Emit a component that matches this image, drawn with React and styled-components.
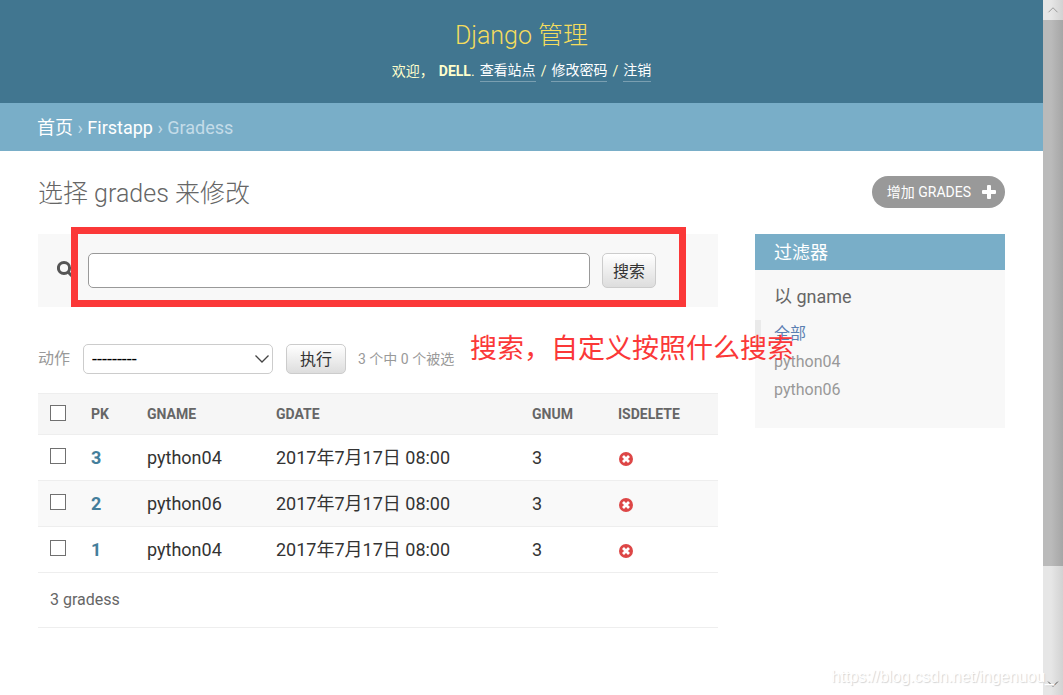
// App.jsx

import React, { useState } from 'react';
import styled, { createGlobalStyle } from 'styled-components';

const GlobalStyle = createGlobalStyle`
  * {
    box-sizing: border-box;
  }
  body {
    margin: 0;
    background: #fff;
    color: #333;
    font-family: Roboto, "Noto Sans CJK SC", sans-serif;
    font-size: 18px;
    line-height: 22px;
  }
  input, select, button {
    font-family: inherit;
    margin: 0;
  }
  a {
    color: inherit;
    text-decoration: none;
  }
`;

const Screen = styled.div`
  position: relative;
  display: flex;
  min-height: 100vh;
  overflow: hidden;
`;

const Page = styled.div`
  flex: 1;
  min-width: 0;
`;

const Header = styled.header`
  display: flex;
  flex-direction: column;
  align-items: center;
  gap: 8px;
  height: 103px;
  padding-top: 20px;
  background: #417690;
  color: #ffc;
`;

const SiteName = styled.h1`
  margin: 0;
  color: #f5dd5d;
  font-size: 25px;
  font-weight: 300;
  line-height: 32px;
`;

const UserTools = styled.div`
  display: flex;
  gap: 5px;
  font-size: 14px;
  line-height: 22px;
`;

const UserLink = styled.a`
  line-height: 20px;
  border-bottom: 1px solid #7a9fb1;
  color: #fff;
`;

const Breadcrumbs = styled.nav`
  height: 48px;
  padding: 14px 37px;
  background: #79aec8;
  color: #c4dce8;
  line-height: 22px;
  a {
    color: #fff;
  }
`;

const Content = styled.main`
  padding: 25px 38px;
`;

const TitleRow = styled.div`
  display: flex;
  justify-content: space-between;
  align-items: flex-start;
  margin-bottom: 22px;
`;

const PageTitle = styled.h2`
  margin: 0;
  color: #666;
  font-size: 25px;
  font-weight: 300;
  line-height: 36px;
`;

const AddLink = styled.a`
  display: flex;
  align-items: center;
  gap: 11px;
  height: 32px;
  padding: 0 9px 0 15px;
  border-radius: 16px;
  background: #999;
  color: #fff;
  font-size: 14px;
  text-transform: uppercase;
`;

const Changelist = styled.div`
  display: flex;
  align-items: flex-start;
  gap: 37px;
`;

const Results = styled.div`
  flex: 1;
  min-width: 0;
`;

const SearchBar = styled.form`
  position: relative;
  display: flex;
  align-items: center;
  height: 73px;
  padding: 0 62px 0 19px;
  background: #f8f8f8;
`;

const SearchLabel = styled.label`
  display: flex;
  width: 31px;
  padding-bottom: 4px;
`;

const SearchInput = styled.input`
  flex: 1;
  min-width: 0;
  height: 35px;
  margin-right: 12px;
  padding: 0 6px;
  border: 1px solid #999;
  border-radius: 5px;
  font-size: 16px;
`;

const Button = styled.button`
  height: ${(props) => props.$height};
  padding: 0 ${(props) => props.$pad} 2px;
  border: 1px solid #ccc;
  border-radius: 5px;
  background: linear-gradient(#fff, #ddd);
  color: #333;
  font-size: 16px;
`;

// Red marker drawn over the search form
const Marker = styled.div`
  position: absolute;
  top: -7px;
  left: 33px;
  right: 32px;
  height: 80px;
  border: 7px solid #fb3838;
  pointer-events: none;
`;

const MarkerText = styled.div`
  position: absolute;
  top: -15px;
  left: 432px;
  color: #fb3838;
  font-size: 27px;
  line-height: 40px;
  white-space: nowrap;
  z-index: 1;
`;

const Actions = styled.div`
  position: relative;
  display: flex;
  align-items: center;
  height: 30px;
  margin: 37px 0 19px;
  color: #999;
`;

const ActionLabel = styled.label`
  display: flex;
  align-items: center;
  gap: 13px;
  margin-right: 13px;
  font-size: 16px;
`;

const SelectWrap = styled.span`
  position: relative;
  display: flex;
  svg {
    position: absolute;
    right: 3px;
    top: 8px;
    pointer-events: none;
  }
`;

const Select = styled.select`
  appearance: none;
  width: 190px;
  height: 30px;
  padding: 0 8px 2px;
  border: 1px solid #ccc;
  border-radius: 5px;
  background: #fff;
  color: #000;
  font-size: 18px;
`;

const Counter = styled.span`
  margin-left: 12px;
  font-size: 14px;
`;

const Table = styled.table`
  width: 100%;
  table-layout: fixed;
  border-spacing: 0;
`;

const HeadCell = styled.th`
  width: ${(props) => props.$width};
  height: 42px;
  padding: 0 12px;
  border-top: 1px solid #eee;
  border-bottom: 1px solid #eee;
  background: #f6f6f6;
  color: #666;
  font-size: 14px;
  font-weight: 700;
  text-align: left;
  text-transform: uppercase;
`;

const Row = styled.tr`
  background: ${(props) => (props.$even ? '#f9f9f9' : '#fff')};
`;

const Cell = styled.td`
  height: 46px;
  padding: 0 12px;
  border-bottom: 1px solid #eee;
  white-space: nowrap;
  svg {
    display: block;
    margin-top: 3px;
  }
`;

const PkLink = styled.a`
  color: #447e9b;
  font-weight: 700;
`;

const Checkbox = styled.input`
  appearance: none;
  display: block;
  width: 16px;
  height: 16px;
  margin-bottom: 3px;
  border: 1px solid #707070;
  background: #fff;
  &:checked {
    background: #79aec8;
  }
`;

const Paginator = styled.p`
  margin: 0;
  padding: 16px 12px;
  border-bottom: 1px solid #eee;
  color: #666;
  font-size: 16px;
`;

const Filter = styled.aside`
  width: 250px;
  padding-bottom: 24px;
  background: #f8f8f8;
`;

const FilterTitle = styled.h2`
  margin: 0 0 16px;
  padding: 8px 19px 6px;
  background: #79aec8;
  color: #fff;
  font-size: 18px;
  font-weight: 400;
  line-height: 22px;
`;

const FilterField = styled.h3`
  margin: 0 0 12px;
  padding: 0 19px;
  color: #666;
  font-size: 18px;
  font-weight: 400;
`;

const FilterList = styled.ul`
  margin: 0;
  padding: 0;
  list-style: none;
`;

const FilterItem = styled.li`
  height: 28px;
  padding-left: ${(props) => (props.$selected ? '13px' : '19px')};
  border-left: ${(props) => (props.$selected ? '6px solid #eaeaea' : 'none')};
  color: ${(props) => (props.$selected ? '#5b80b2' : '#999')};
  font-size: 16px;
  line-height: 28px;
`;

const ScrollRail = styled.div`
  display: flex;
  flex-direction: column;
  width: 20px;
  background: linear-gradient(to right, #e6e6e6 40%, #d2d2d2);
`;

const ScrollButton = styled.button`
  display: flex;
  align-items: center;
  justify-content: center;
  height: 20px;
  padding: 0;
  border: 0;
  background: none;
`;

const ScrollThumb = styled.div`
  flex: 5;
  background: linear-gradient(to right, #bababa 40%, #a6a6a6);
`;

const ScrollRest = styled.div`
  flex: 1;
`;

const Watermark = styled.div`
  position: absolute;
  right: 9px;
  bottom: 7px;
  color: #fff;
  font-family: "Liberation Sans", sans-serif;
  font-size: 16px;
  text-shadow: 1px 1px 1px #d4d4d4;
`;

const SearchIcon = () => (
  <svg width="18" height="18" viewBox="0 0 18 18" fill="none" stroke="#555" strokeWidth="3">
    <circle cx="7" cy="8" r="5.6" />
    <path d="M11 12l5 5" />
  </svg>
);

const PlusIcon = () => (
  <svg width="14" height="14" viewBox="0 0 14 14" fill="#fff">
    <path d="M5 1q0-1 1-1h2q1 0 1 1v4h4q1 0 1 1v2q0 1-1 1H9v4q0 1-1 1H6q-1 0-1-1V9H1q-1 0-1-1V6q0-1 1-1h4z" />
  </svg>
);

const NoIcon = () => (
  <svg width="16" height="16" viewBox="0 0 16 16" role="img" aria-label="False">
    <circle cx="8" cy="8" r="7" fill="#dd4646" />
    <path d="M5 5l6 6M11 5l-6 6" stroke="#fff" strokeWidth="2.8" />
  </svg>
);

const Chevron = ({ up, size = 16, color = '#444' }) => (
  <svg width={size} height={size} viewBox="0 0 16 16" fill="none" stroke={color} strokeWidth="1.3">
    <path d={up ? 'M2 11l6-6 6 6' : 'M1.5 3.5l6.5 6.5 6.5-6.5'} />
  </svg>
);

const columns = [
  { name: 'pk', width: '56px' },
  { name: 'gname', width: '129px' },
  { name: 'gdate', width: '256px' },
  { name: 'gnum', width: '86px' },
  { name: 'isdelete', width: 'auto' },
];

const grades = [
  { pk: 3, name: 'python04', date: '2017年7月17日 08:00', num: 3 },
  { pk: 2, name: 'python06', date: '2017年7月17日 08:00', num: 3 },
  { pk: 1, name: 'python04', date: '2017年7月17日 08:00', num: 3 },
];

const filters = ['全部', 'python04', 'python06'];

const App = () => {
  const [query, setQuery] = useState('');

  return (
    <>
      <GlobalStyle />
      <Screen>
        <Page>
          <Header>
            <SiteName>Django 管理</SiteName>
            <UserTools>
              <span>欢迎，</span>
              <span><strong>DELL</strong>.</span>
              <UserLink href="#site">查看站点</UserLink>
              <span>/</span>
              <UserLink href="#password">修改密码</UserLink>
              <span>/</span>
              <UserLink href="#logout">注销</UserLink>
            </UserTools>
          </Header>
          <Breadcrumbs>
            <a href="#home">首页</a> › <a href="#firstapp">Firstapp</a> › Gradess
          </Breadcrumbs>
          <Content>
            <TitleRow>
              <PageTitle>选择 grades 来修改</PageTitle>
              <AddLink href="#add">
                增加 grades
                <PlusIcon />
              </AddLink>
            </TitleRow>
            <Changelist>
              <Results>
                <SearchBar onSubmit={(e) => e.preventDefault()}>
                  <SearchLabel htmlFor="searchbar" aria-label="搜索">
                    <SearchIcon />
                  </SearchLabel>
                  <SearchInput id="searchbar" value={query} onChange={(e) => setQuery(e.target.value)} />
                  <Button type="submit" $height="35px" $pad="10px">搜索</Button>
                  <Marker />
                </SearchBar>
                <Actions>
                  <ActionLabel>
                    动作
                    <SelectWrap>
                      <Select>
                        <option>---------</option>
                      </Select>
                      <Chevron />
                    </SelectWrap>
                  </ActionLabel>
                  <Button type="button" $height="30px" $pad="13px">执行</Button>
                  <Counter>3 个中 0 个被选</Counter>
                  <MarkerText>搜索，自定义按照什么搜索</MarkerText>
                </Actions>
                <Table>
                  <thead>
                    <tr>
                      <HeadCell $width="41px">
                        <Checkbox type="checkbox" aria-label="全选" />
                      </HeadCell>
                      {columns.map((column) => (
                        <HeadCell key={column.name} $width={column.width}>{column.name}</HeadCell>
                      ))}
                    </tr>
                  </thead>
                  <tbody>
                    {grades.map((grade, index) => (
                      <Row key={grade.pk} $even={index % 2 === 1}>
                        <Cell>
                          <Checkbox type="checkbox" aria-label={`grade ${grade.pk}`} />
                        </Cell>
                        <Cell>
                          <PkLink href={`#${grade.pk}`}>{grade.pk}</PkLink>
                        </Cell>
                        <Cell>{grade.name}</Cell>
                        <Cell>{grade.date}</Cell>
                        <Cell>{grade.num}</Cell>
                        <Cell>
                          <NoIcon />
                        </Cell>
                      </Row>
                    ))}
                  </tbody>
                </Table>
                <Paginator>3 gradess</Paginator>
              </Results>
              <Filter>
                <FilterTitle>过滤器</FilterTitle>
                <FilterField>以 gname</FilterField>
                <FilterList>
                  {filters.map((name, index) => (
                    <FilterItem key={name} $selected={index === 0}>
                      <a href={`#${name}`}>{name}</a>
                    </FilterItem>
                  ))}
                </FilterList>
              </Filter>
            </Changelist>
          </Content>
        </Page>
        <ScrollRail>
          <ScrollButton aria-label="Scroll up">
            <Chevron up size={12} color="#999" />
          </ScrollButton>
          <ScrollThumb />
          <ScrollRest />
          <ScrollButton aria-label="Scroll down">
            <Chevron size={12} color="#555" />
          </ScrollButton>
        </ScrollRail>
        <Watermark>https://blog.csdn.net/ingenuou_</Watermark>
      </Screen>
    </>
  );
};

export default App;
